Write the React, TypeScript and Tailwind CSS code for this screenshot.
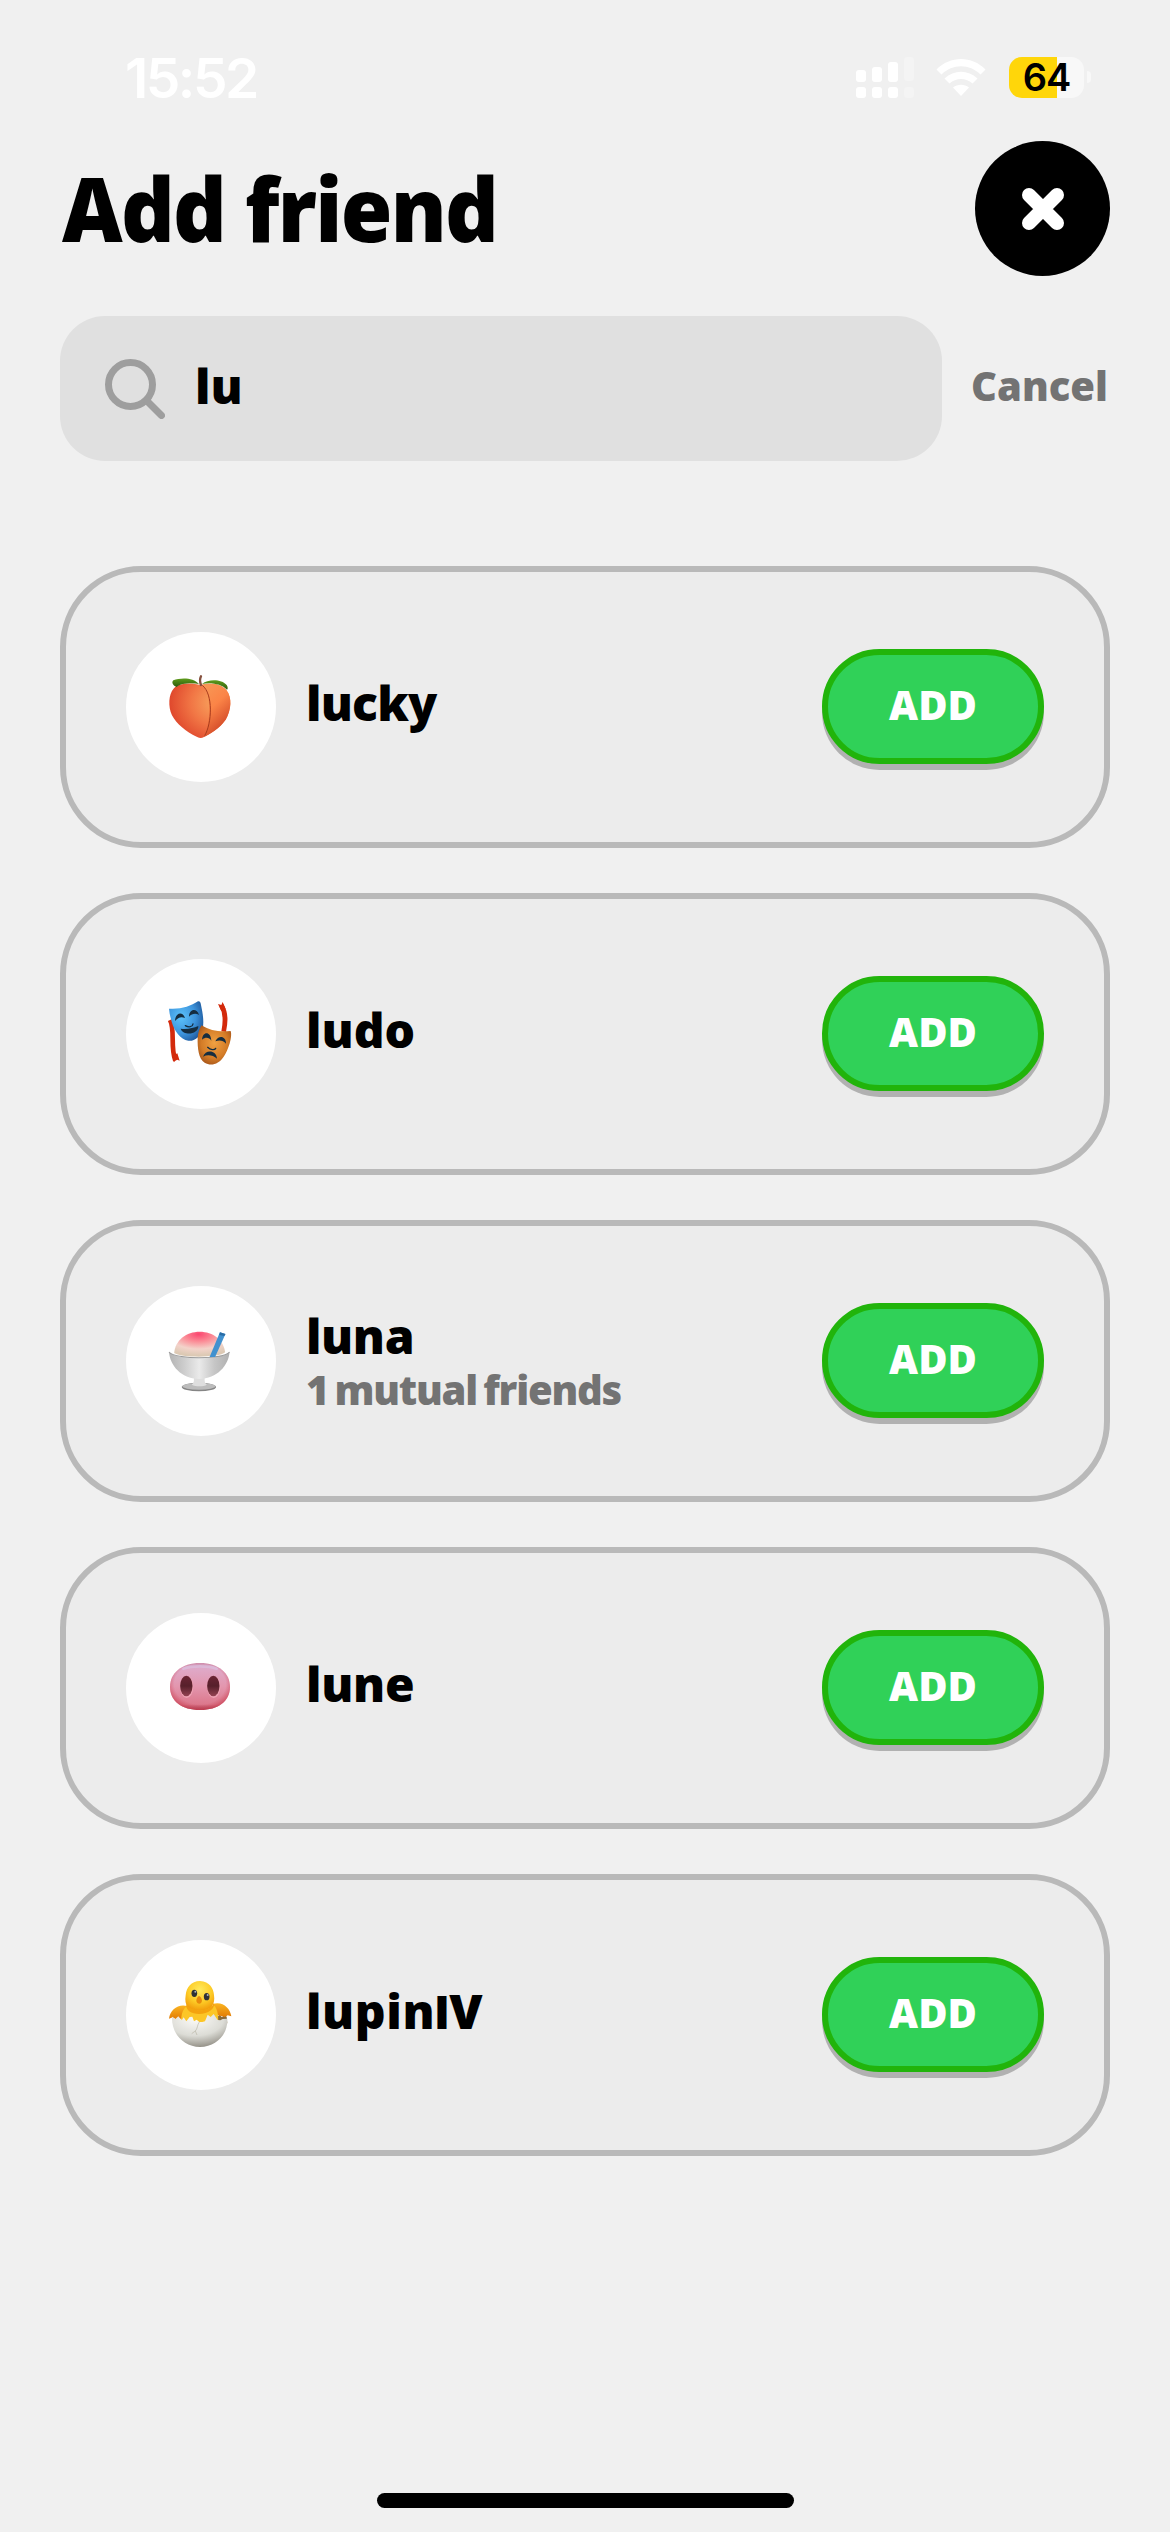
import type { ReactNode } from "react";

function Peach() {
  return (
    <svg viewBox="228 246 450 450" className="size-full">
      <defs>
        <radialGradient id="peachL" cx="0.78" cy="0.35" r="0.85">
          <stop offset="0" stopColor="#f9a860" />
          <stop offset="0.5" stopColor="#f17645" />
          <stop offset="1" stopColor="#dc3f28" />
        </radialGradient>
        <linearGradient id="peachR" x1="0" y1="0" x2="0.5" y2="1">
          <stop offset="0" stopColor="#f79a58" />
          <stop offset="0.5" stopColor="#fb8447" />
          <stop offset="1" stopColor="#cf4526" />
        </linearGradient>
        <linearGradient id="leaf" x1="0" y1="0" x2="0" y2="1">
          <stop offset="0" stopColor="#5f9c1c" />
          <stop offset="1" stopColor="#2c5a0c" />
        </linearGradient>
      </defs>
      <path d="M452 405C475 398 512 399 529 420C547 442 544 481 527 509C509 535 480 551 462 561C450 567 444 562 428 554C398 538 370 511 362 486C354 456 358 425 378 409C398 397 430 399 452 405Z" fill="url(#peachL)" />
      <path d="M456 405C475 398 512 399 529 420C547 442 544 481 527 509C509 535 480 551 462 561C478 535 490 435 456 405Z" fill="url(#peachR)" />
      <path d="M457 406C490 432 486 520 464 557" fill="none" stroke="#a83b1d" strokeWidth="3" />
      <path d="M447 402C430 382 392 382 370 391C362 398 372 409 380 411C392 400 425 398 447 402Z" fill="url(#leaf)" />
      <path d="M456 402C475 386 515 387 530 405C534 412 534 417 531 419C514 401 481 396 456 402Z" fill="url(#leaf)" />
      <path d="M453 405C449 395 449 387 453 379" fill="none" stroke="#85503e" strokeWidth="7" strokeLinecap="round" />
    </svg>
  );
}

function Masks() {
  return (
    <svg viewBox="48 57 450 450" className="size-full">
      <defs>
        <radialGradient id="blueMask" cx="0.35" cy="0.4" r="0.7">
          <stop offset="0" stopColor="#5cc2fb" />
          <stop offset="0.6" stopColor="#3d94dc" />
          <stop offset="1" stopColor="#1f5a9e" />
        </radialGradient>
        <radialGradient id="orangeMask" cx="0.5" cy="0.45" r="0.65">
          <stop offset="0" stopColor="#f0a142" />
          <stop offset="0.6" stopColor="#d47c27" />
          <stop offset="1" stopColor="#9c4c16" />
        </radialGradient>
      </defs>
      <path d="M180 240C196 270 180 320 196 362" fill="none" stroke="#d32a0c" strokeWidth="14" />
      <path d="M188 347L192 367L199 358L209 362L202 340Z" fill="#d32a0c" />
      <path d="M334 196C350 222 346 250 341 275" fill="none" stroke="#d32a0c" strokeWidth="14" />
      <path d="M324 192L334 195L338 186L347 208L334 213Z" fill="#d32a0c" />
      <path d="M177 206C210 209 242 199 264 184C270 183 272 188 273 195C277 214 283 242 278 266C271 292 251 305 235 302C211 298 192 271 185 245C181 231 178 219 177 206Z" fill="url(#blueMask)" />
      <path d="M275 256C300 273 330 276 362 273C368 290 355 330 341 350C326 373 303 379 284 368C266 356 262 325 263 293C264 278 268 265 275 256Z" fill="url(#orangeMask)" />
      <g fill="#152d40">
        <path d="M195 243C196 217 218 213 225 234C214 229 204 232 195 243Z" />
        <path d="M237 230C237 205 262 203 267 225C257 219 246 221 237 230Z" />
        <path d="M212 266C231 269 250 264 265 258C266 284 220 289 212 266Z" />
        <path d="M276 299C278 273 302 273 304 302C297 291 286 291 276 299Z" />
        <path d="M316 304C325 285 348 287 348 311C340 301 328 299 316 304Z" />
        <path d="M279 350C286 328 319 329 321 356C309 345 292 343 279 350Z" />
      </g>
      <path d="M226 257C236 263 248 261 249 252M293 322C301 330 314 331 317 325" fill="none" stroke="#152d40" strokeWidth="4" strokeLinecap="round" />
    </svg>
  );
}

function ShavedIce() {
  return (
    <svg viewBox="46 78 436 450" preserveAspectRatio="none" className="size-full">
      <defs>
        <radialGradient id="ice" cx="0.48" cy="0.1" r="0.85">
          <stop offset="0" stopColor="#fb4770" />
          <stop offset="0.35" stopColor="#fb8d97" />
          <stop offset="0.7" stopColor="#f3d3ca" />
          <stop offset="1" stopColor="#dcc9b4" />
        </radialGradient>
        <linearGradient id="bowl" x1="0" y1="0" x2="1" y2="0">
          <stop offset="0" stopColor="#b3b3b3" />
          <stop offset="0.25" stopColor="#cdcdcd" />
          <stop offset="0.5" stopColor="#eaeaea" />
          <stop offset="0.75" stopColor="#c6c6c6" />
          <stop offset="1" stopColor="#b0b0b0" />
        </linearGradient>
      </defs>
      <ellipse cx="258" cy="381" rx="50" ry="13" fill="#858585" />
      <ellipse cx="258" cy="379" rx="48" ry="10" fill="#bcbcbc" />
      <path d="M242 348H276C273 360 274 369 281 374C271 380 248 380 237 374C244 369 245 360 242 348Z" fill="#dedede" />
      <path d="M171 276C180 290 230 294 258 294C290 294 337 290 347 276C344 316 312 356 258 357C206 356 174 316 171 276Z" fill="url(#bowl)" />
      <path d="M171 276C180 289 230 293 258 293C290 293 337 289 347 276" fill="none" stroke="#999999" strokeWidth="3" />
      <path d="M186 279C189 240 222 215 260 215C300 215 330 240 334 277C318 294 204 294 186 279Z" fill="url(#ice)" />
      <path d="M319 217L335 222L305 291L289 291Z" fill="#4191cf" />
      <path d="M319 217L335 222L332 228L317 225Z" fill="#2a6da6" />
    </svg>
  );
}

function PigNose() {
  return (
    <svg viewBox="48 69 450 450" className="size-full">
      <defs>
        <linearGradient id="snout" x1="0" y1="0" x2="0" y2="1">
          <stop offset="0" stopColor="#cf93b2" />
          <stop offset="0.12" stopColor="#dfa9c8" />
          <stop offset="0.5" stopColor="#e396ae" />
          <stop offset="0.88" stopColor="#dc788c" />
          <stop offset="1" stopColor="#a63a4d" />
        </linearGradient>
        <radialGradient id="snoutEdge" cx="0.5" cy="0.45" r="0.55">
          <stop offset="0.78" stopColor="#cf4a5d" stopOpacity="0" />
          <stop offset="1" stopColor="#c93e51" stopOpacity="0.65" />
        </radialGradient>
        <linearGradient id="nostril" x1="0" y1="0" x2="0" y2="1">
          <stop offset="0" stopColor="#6b2434" />
          <stop offset="0.5" stopColor="#57202b" />
          <stop offset="1" stopColor="#944252" />
        </linearGradient>
      </defs>
      <path d="M270 219C325 219 360 249 360 291C360 333 325 360 270 360C215 360 180 333 180 291C180 249 215 219 270 219Z" fill="url(#snout)" />
      <path d="M270 219C325 219 360 249 360 291C360 333 325 360 270 360C215 360 180 333 180 291C180 249 215 219 270 219Z" fill="url(#snoutEdge)" />
      <path d="M220 236C245 227 295 227 320 236" fill="none" stroke="#dcc0e0" strokeWidth="8" strokeLinecap="round" opacity="0.7" />
      <ellipse cx="230" cy="291" rx="20" ry="33" fill="#efa3b4" />
      <ellipse cx="311" cy="291" rx="20" ry="33" fill="#efa3b4" />
      <ellipse cx="229" cy="288" rx="18.500" ry="31" fill="url(#nostril)" />
      <ellipse cx="310" cy="288" rx="18.500" ry="31" fill="url(#nostril)" />
    </svg>
  );
}

function Chick() {
  return (
    <svg viewBox="48 60 450 450" className="size-full">
      <defs>
        <radialGradient id="chick" cx="0.5" cy="0.3" r="0.7">
          <stop offset="0" stopColor="#ffea5c" />
          <stop offset="0.6" stopColor="#fdcb26" />
          <stop offset="1" stopColor="#f29c0b" />
        </radialGradient>
        <linearGradient id="wing" x1="0" y1="0" x2="0" y2="1">
          <stop offset="0" stopColor="#fbb521" />
          <stop offset="1" stopColor="#e27c05" />
        </linearGradient>
        <radialGradient id="shell" cx="0.42" cy="0.15" r="0.85">
          <stop offset="0" stopColor="#fbfaf7" />
          <stop offset="0.6" stopColor="#dcdcd6" />
          <stop offset="1" stopColor="#96938a" />
        </radialGradient>
      </defs>
      <path d="M322 292L328 284L336 292L343 284L350 290L352 310L320 312Z" fill="#8a6a38" />
      <path d="M232 258C205 250 180 269 177 296L188 292L196 297L222 296Z" fill="url(#wing)" />
      <path d="M308 252C338 243 360 264 364 289L353 286L345 291L318 284Z" fill="url(#wing)" />
      <path d="M226 262C215 275 212 290 214 320H324C326 290 324 272 314 258Z" fill="#fcc627" />
      <path d="M270 183C299 184 311 206 312 226C316 252 305 272 269 272C235 272 222 257 227 226C230 201 243 184 270 183Z" fill="url(#chick)" />
      <path d="M229 252C240 275 297 280 312 249C316 266 295 282 267 282C245 282 226 272 229 252Z" fill="#f4a30f" />
      <path d="M186 290L196 297L205 289L215 301L221 292L229 304L239 291L247 290L252 304L260 299L268 306L277 306L285 304L293 284L302 291L311 282L323 300L331 301L338 297L352 296C354 344 319 380 270 381C220 380 184 341 186 290Z" fill="url(#shell)" />
      <path d="M268 306C261 316 263 326 256 333L245 341M256 333L261 345" fill="none" stroke="#b9b6a8" strokeWidth="2" />
      <ellipse cx="253" cy="220" rx="8.500" ry="11" fill="#303236" />
      <ellipse cx="290" cy="230" rx="8.500" ry="11" fill="#303236" />
      <circle cx="256" cy="215" r="3" fill="#aeb3ba" />
      <circle cx="293" cy="225" r="3" fill="#aeb3ba" />
      <path d="M267 228C275 232 279 243 273 249C268 254 260 250 259 243C259 237 262 230 267 228Z" fill="#e88a0c" />
    </svg>
  );
}

type Friend = { id: string; name: ReactNode; spacing: string; note?: string; avatar: ReactNode };

const friends: Friend[] = [
  { id: "lucky", name: "lucky", spacing: "tracking-[-0.800px]", avatar: <Peach /> },
  { id: "ludo", name: "ludo", spacing: "tracking-normal", avatar: <Masks /> },
  { id: "luna", name: "luna", spacing: "tracking-[-0.400px]", note: "1 mutual friends", avatar: <ShavedIce /> },
  { id: "lune", name: "lune", spacing: "tracking-[-0.300px]", avatar: <PigNose /> },
  {
    id: "lupinIV",
    name: (
      <>
        lupin<span className="font-['Inter'] text-[46px] font-black">I</span>V
      </>
    ),
    spacing: "tracking-[0.600px]",
    avatar: <Chick />,
  },
];

function StatusBar() {
  return (
    <div className="flex h-[141px] items-start justify-between pl-[125px] pr-[79px] pt-[57px]">
      <span className="-mt-[13px] font-['Inter'] text-[55px] font-semibold leading-[68px] tracking-[-2.500px] text-white">15:52</span>
      <div className="flex h-[41px] items-start">
        <svg className="mr-[22px] h-[41px] w-[58px]" viewBox="0 0 58 41" fill="#fff">
          <rect x="0" y="13" width="10" height="12" rx="3" />
          <rect x="16" y="10" width="10" height="15" rx="3" />
          <rect x="32" y="5" width="10" height="20" rx="3" />
          <rect x="48" y="0" width="10" height="24" rx="3" opacity="0.25" />
          <rect x="0" y="30" width="10" height="11" rx="3" />
          <rect x="16" y="30" width="10" height="11" rx="3" />
          <rect x="32" y="30" width="10" height="11" rx="3" />
          <rect x="48" y="30" width="10" height="11" rx="3" opacity="0.25" />
        </svg>
        <svg className="mr-[23px] h-[41px] w-[50px]" viewBox="0 0 50 41" fill="#fff">
          <path d="M0.500 12.500C14 -1.500 36 -1.500 49.500 12.500L44.500 17.500C33.500 6.500 16.500 6.500 5.500 17.500Z" />
          <path d="M8.500 21.500C18 12.500 32 12.500 41.500 21.500L36.500 26.500C30 20.500 20 20.500 13.500 26.500Z" />
          <path d="M17 30.500C21.500 26.800 28.500 26.800 33 30.500L25 39Z" />
        </svg>
        <div className="flex h-[41px] w-[75px] items-center justify-center rounded-[13px] bg-[linear-gradient(90deg,#ffd60a_48px,#f8f8f8_48px)]">
          <span className="font-['Inter'] text-[38px] font-semibold leading-[41px] tracking-[-1px] text-black">64</span>
        </div>
        <div className="ml-[3px] mt-[14px] h-[12px] w-[4px] rounded-r-full bg-[#f8f8f8]" />
      </div>
    </div>
  );
}

function FriendCard({ friend }: { friend: Friend }) {
  return (
    <li className="flex h-[282px] items-center rounded-[81px] border-[6px] border-[#b9b9b9] bg-[#ececec] px-[60px]">
      <div className="size-[150px] shrink-0 rounded-full bg-white">{friend.avatar}</div>
      <div className={friend.note ? "ml-[30px] flex grow flex-col pt-[3px]" : "ml-[30px] flex grow flex-col pb-[9px]"}>
        <span className={`h-[51px] text-[48px] leading-[51px] text-black ${friend.spacing}`}>{friend.name}</span>
        {friend.note && (
          <span className="mt-[3px] whitespace-nowrap text-[40px] leading-[51px] tracking-[-1.200px] text-[#737373] [word-spacing:-3px]">{friend.note}</span>
        )}
      </div>
      <button className="mb-[1px] flex h-[115px] w-[222px] items-center justify-center rounded-full border-[6px] border-[#21b40b] bg-[#30d158] pb-[3px] text-[40px] leading-none text-white shadow-[0_6px_0_#b1b1b1]">
        ADD
      </button>
    </li>
  );
}

export default function App() {
  return (
    <div className="flex h-[2532px] w-[1170px] flex-col overflow-hidden bg-[#f0f0f0] font-['Open_Sans',sans-serif] font-extrabold">
      <StatusBar />
      <header className="flex h-[135px] items-center justify-between px-[60px]">
        <h1 className="origin-left scale-x-[0.95] pl-[2px] text-[88px] leading-[135px] tracking-[-1.800px] text-black">Add friend</h1>
        <button aria-label="Close" className="flex size-[135px] items-center justify-center rounded-full bg-black">
          <svg className="size-[42px]" viewBox="0 0 42 42" fill="none" stroke="#fff" strokeWidth="14" strokeLinecap="round">
            <path d="M7 7L35 35M35 7L7 35" />
          </svg>
        </button>
      </header>
      <div className="mt-[40px] flex h-[145px] items-center pl-[60px] pr-[62px]">
        <div className="flex h-[145px] w-[882px] items-center rounded-[45px] bg-[#e0e0e0] pl-[45px]">
          <svg className="mt-[1px] size-[60px]" viewBox="0 0 60 60" fill="none" stroke="#9e9e9e" strokeWidth="7">
            <circle cx="25.500" cy="25.500" r="22" />
            <path d="M42 42L56.500 56.500" strokeLinecap="round" />
          </svg>
          <span className="ml-[30px] pb-[6px] text-[48px] leading-none text-black">lu</span>
        </div>
        <span className="ml-auto pb-[5px] text-[40px] leading-none text-[#737373]">Cancel</span>
      </div>
      <ul className="mt-[105px] flex flex-col gap-[45px] px-[60px]">
        {friends.map((f) => (
          <FriendCard key={f.id} friend={f} />
        ))}
      </ul>
      <div className="mx-auto mb-[24px] mt-auto h-[15px] w-[417px] shrink-0 rounded-full bg-black" />
    </div>
  );
}
